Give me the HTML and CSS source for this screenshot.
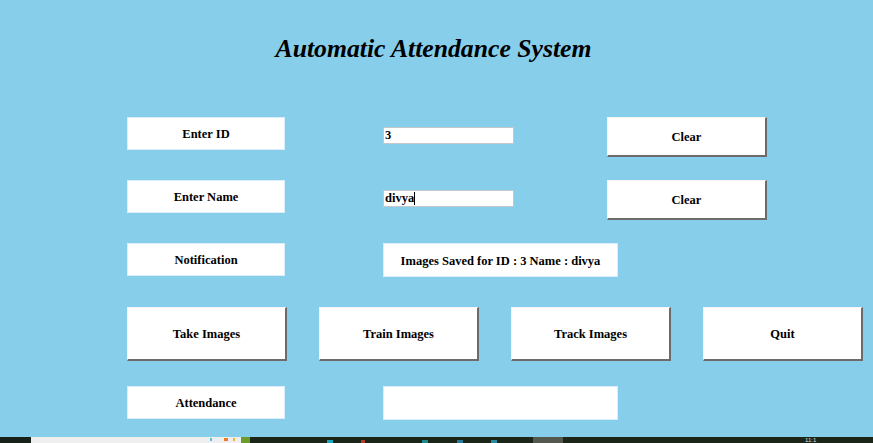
FILE: index.html
```html
<!DOCTYPE html>
<html lang="en">
<head>
<meta charset="utf-8">
<title>Automatic Attendance System</title>
<link rel="stylesheet" href="styles.css">
</head>
<body>
<div class="window">
  <header class="header">
    <h1 class="title">Automatic Attendance System</h1>
  </header>
  <main class="form">
    <div class="row">
      <div class="label">Enter ID</div>
      <div class="entry">3</div>
      <button class="btn clear">Clear</button>
    </div>
    <div class="row">
      <div class="label">Enter Name</div>
      <div class="entry">divya<span class="caret"></span></div>
      <button class="btn clear">Clear</button>
    </div>
    <div class="row">
      <div class="label">Notification</div>
      <div class="message">Images Saved for ID : 3 Name : divya</div>
    </div>
    <div class="row actions">
      <button class="btn big">Take Images</button>
      <button class="btn big">Train Images</button>
      <button class="btn big">Track Images</button>
      <button class="btn big">Quit</button>
    </div>
    <div class="row">
      <div class="label">Attendance</div>
      <div class="message"></div>
    </div>
  </main>
</div>
<footer class="taskbar">
  <div class="tb-start"></div>
  <div class="tb-search">
    <span class="dot dot-cyan"></span>
    <span class="dot dot-orange"></span>
    <span class="dot dot-yellow"></span>
  </div>
  <div class="tb-green"></div>
  <div class="tb-apps">
    <span class="app app-cyan"></span>
    <span class="app app-red"></span>
    <span class="app app-teal"></span>
    <span class="app app-teal2"></span>
    <span class="app app-teal3"></span>
    <span class="app app-active"></span>
    <span class="tb-clock">11:1</span>
  </div>
</footer>
</body>
</html>
```
FILE: styles.css
```css
html, body {
  margin: 0;
  padding: 0;
}
body {
  width: 873px;
  height: 443px;
  overflow: hidden;
  background: #87ceeb;
  font-family: "Liberation Serif", "Times New Roman", serif;
  color: #000;
}
.window {
  height: 437px;
}
.header {
  height: 117px;
  box-sizing: border-box;
  padding-top: 34px;
  padding-right: 6px;
  text-align: center;
}
.title {
  margin: 0;
  font-size: 25.7px;
  line-height: 30px;
  font-weight: bold;
  font-style: italic;
}
.form {
  display: grid;
  grid-template-rows: 63px 63px 64px 79px 33px;
  padding-left: 127px;
}
.row {
  display: flex;
  align-items: flex-start;
}
.label {
  box-sizing: border-box;
  width: 158px;
  height: 33px;
  padding-top: 2px;
  background: #fff;
  border: 1px solid #d8eef8;
  display: flex;
  align-items: center;
  justify-content: center;
  font-size: 12.5px;
  font-weight: bold;
}
.entry {
  box-sizing: border-box;
  margin-left: 98px;
  margin-top: 10px;
  width: 131px;
  height: 17px;
  background: #fff;
  border: 1px solid #c4c8cc;
  font-size: 12.5px;
  font-weight: bold;
  line-height: 15px;
  padding-left: 1px;
  display: flex;
  align-items: center;
}
.caret {
  display: inline-block;
  width: 1px;
  height: 13px;
  background: #000;
}
.btn {
  box-sizing: border-box;
  background: #fff;
  border: 0;
  border-top: 1px solid #f4f4f4;
  border-left: 1px solid #f4f4f4;
  border-right: 2px solid #6b6b6b;
  border-bottom: 2px solid #6b6b6b;
  font-family: inherit;
  font-size: 12.5px;
  font-weight: bold;
  color: #000;
  padding: 2px 0 0 0;
  display: flex;
  align-items: center;
  justify-content: center;
}
.clear {
  margin-left: 93px;
  width: 160px;
  height: 40px;
}
.message {
  box-sizing: border-box;
  margin-left: 98px;
  width: 235px;
  height: 34px;
  padding-top: 2px;
  background: #fff;
  border: 1px solid #d8eef8;
  display: flex;
  align-items: center;
  justify-content: center;
  font-size: 12.5px;
  font-weight: bold;
}
.actions {
  gap: 32px;
}
.big {
  width: 160px;
  height: 54px;
}
.taskbar {
  height: 6px;
  display: flex;
  background: #1b2619;
}
.tb-start {
  width: 31px;
  background: #17211a;
}
.tb-search {
  width: 210px;
  background: #efefef;
  position: relative;
}
.dot {
  position: absolute;
  top: 1px;
  width: 2px;
  height: 3px;
}
.dot-cyan { left: 179px; background: #49c6e0; }
.dot-orange { left: 193px; width: 4px; background: #f07a2a; }
.dot-yellow { left: 202px; background: #f2b12b; }
.tb-green {
  width: 9px;
  background: #6e9c2a;
}
.tb-apps {
  flex: 1;
  position: relative;
}
.app {
  position: absolute;
  top: 3px;
  height: 3px;
  width: 6px;
}
.app-cyan { left: 77px; background: #1aa7c0; }
.app-red { left: 111px; background: #b0402a; width: 4px; }
.app-teal { left: 172px; background: #1f8a8a; }
.app-teal2 { left: 207px; background: #2a7a9a; }
.app-teal3 { left: 241px; background: #2a8aa0; }
.app-active { left: 283px; top: 0; height: 6px; width: 30px; background: #55584f; }
.tb-clock {
  position: absolute;
  left: 555px;
  top: 0;
  font-family: "Liberation Sans", sans-serif;
  font-size: 6px;
  line-height: 6px;
  color: #ddd;
}
```
